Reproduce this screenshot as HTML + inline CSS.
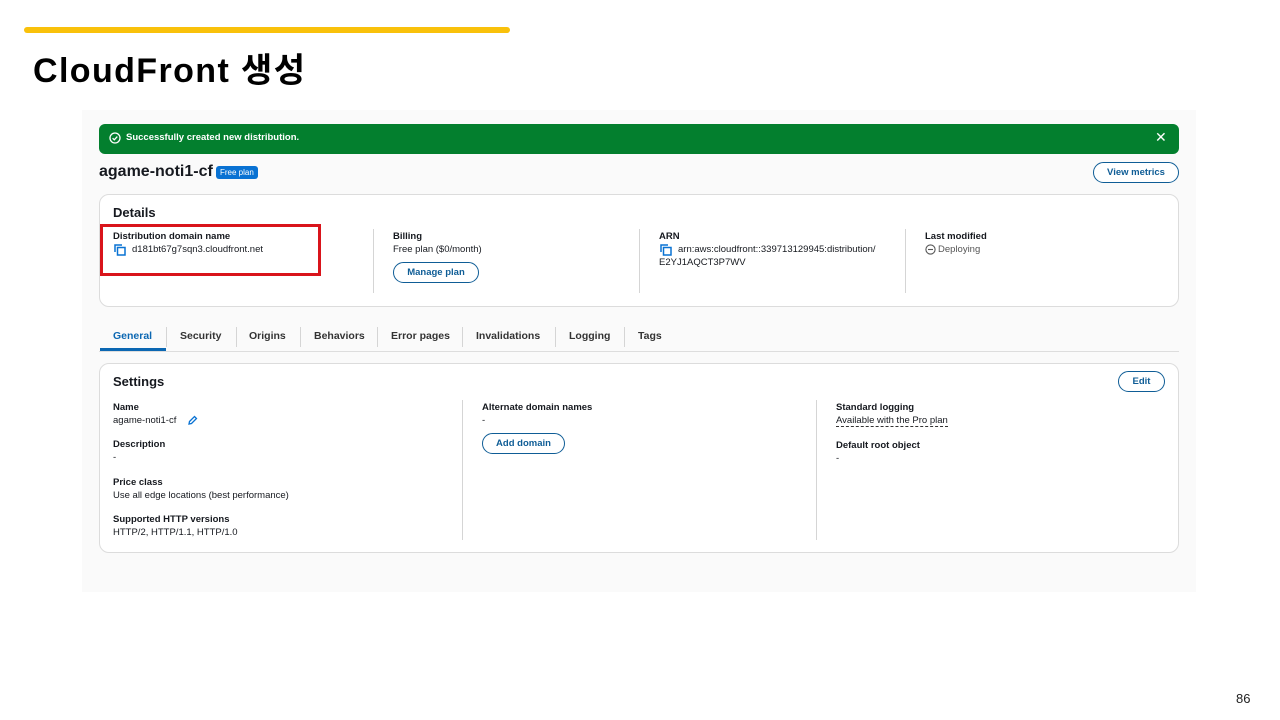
<!DOCTYPE html>
<html><head><meta charset="utf-8"><style>
*{margin:0;padding:0;box-sizing:border-box}
body{width:1280px;height:720px;background:#fff;position:relative;font-family:"Liberation Sans","Noto Sans CJK KR",sans-serif;color:#16191f;overflow:hidden}
.a{position:absolute;white-space:nowrap}
.s{font-size:9.5px}
.b{font-weight:bold}
.card{position:absolute;background:#fff;border:1px solid #dcdcdc;border-radius:10px}
.btn{position:absolute;border:1.5px solid #0f5d96;border-radius:14px;color:#0f5d96;font-weight:bold;font-size:9.5px;background:#fff;display:flex;align-items:center;justify-content:center}
.vl{position:absolute;width:1px;background:#d5d5d5}
</style></head><body>
<div class="a" style="left:24px;top:27px;width:486px;height:6px;background:#f9c10b;border-radius:3px"></div>
<div class="a b" style="left:33px;top:43px;font-size:34px;letter-spacing:1.4px;color:#000">CloudFront 생성</div>
<div class="a" style="left:82px;top:110px;width:1114px;height:482px;background:#fafafa"></div>
<div class="a" style="left:99px;top:124px;width:1080px;height:30px;background:#037f2e;border-radius:6px"></div>
<svg class="a" style="left:109px;top:132px" width="12" height="12" viewBox="0 0 12 12"><circle cx="6" cy="6" r="5" fill="none" stroke="#fff" stroke-width="1.3"/><path d="M3.6 6.2l1.7 1.6 3-3.2" fill="none" stroke="#fff" stroke-width="1.3"/></svg>
<div class="a b" style="left:126px;top:132px;font-size:9.5px;color:#fff">Successfully created new distribution.</div>
<div class="a" style="left:1155px;top:129px;font-size:14px;color:#fff">✕</div>
<div class="a b" style="left:99px;top:163px;font-size:16px">agame-noti1-cf</div>
<div class="a" style="left:216px;top:166px;background:#0972d3;color:#fff;font-size:8px;padding:2px 4px;border-radius:3px">Free plan</div>
<div class="btn" style="left:1093px;top:162px;width:86px;height:21px">View metrics</div>
<div class="card" style="left:99px;top:194px;width:1080px;height:113px"></div>
<div class="a b" style="left:113px;top:205px;font-size:13px">Details</div>
<div class="a" style="left:100px;top:224px;width:221px;height:52px;border:3px solid #d9141b"></div>
<div class="a b s" style="left:113px;top:231px">Distribution domain name</div>
<svg class="a" style="left:114px;top:244px" width="13" height="12" viewBox="0 0 13 12"><path d="M1 8V1h7" fill="none" stroke="#0972d3" stroke-width="1.5"/><rect x="3.5" y="3.5" width="7.5" height="7.5" fill="none" stroke="#0972d3" stroke-width="1.5"/></svg>
<div class="a s" style="left:132px;top:244px">d181bt67g7sqn3.cloudfront.net</div>
<div class="vl" style="left:373px;top:229px;height:64px"></div>
<div class="a b s" style="left:393px;top:231px">Billing</div>
<div class="a s" style="left:393px;top:244px">Free plan ($0/month)</div>
<div class="btn" style="left:393px;top:262px;width:86px;height:21px">Manage plan</div>
<div class="vl" style="left:639px;top:229px;height:64px"></div>
<div class="a b s" style="left:659px;top:231px">ARN</div>
<svg class="a" style="left:660px;top:244px" width="13" height="12" viewBox="0 0 13 12"><path d="M1 8V1h7" fill="none" stroke="#0972d3" stroke-width="1.5"/><rect x="3.5" y="3.5" width="7.5" height="7.5" fill="none" stroke="#0972d3" stroke-width="1.5"/></svg>
<div class="a s" style="left:678px;top:244px">arn:aws:cloudfront::339713129945:distribution/</div>
<div class="a s" style="left:659px;top:257px">E2YJ1AQCT3P7WV</div>
<div class="vl" style="left:905px;top:229px;height:64px"></div>
<div class="a b s" style="left:925px;top:231px">Last modified</div>
<svg class="a" style="left:925px;top:244px" width="11" height="11" viewBox="0 0 11 11"><circle cx="5.5" cy="5.5" r="4.6" fill="none" stroke="#555" stroke-width="1.1"/><path d="M3 5.5h5" stroke="#555" stroke-width="1.1"/></svg>
<div class="a s" style="left:938px;top:244px;color:#555">Deploying</div>
<div class="a" style="left:99px;top:351px;width:1080px;height:1px;background:#ddd"></div>
<div class="a" style="left:100px;top:348px;width:66px;height:3px;background:#0b67b2"></div>
<div class="a b" style="font-size:10.5px;left:113px;top:330px;color:#0b67b2">General</div>
<div class="a b" style="font-size:10.5px;left:180px;top:330px;color:#333">Security</div>
<div class="a b" style="font-size:10.5px;left:249px;top:330px;color:#333">Origins</div>
<div class="a b" style="font-size:10.5px;left:314px;top:330px;color:#333">Behaviors</div>
<div class="a b" style="font-size:10.5px;left:391px;top:330px;color:#333">Error pages</div>
<div class="a b" style="font-size:10.5px;left:476px;top:330px;color:#333">Invalidations</div>
<div class="a b" style="font-size:10.5px;left:569px;top:330px;color:#333">Logging</div>
<div class="a b" style="font-size:10.5px;left:638px;top:330px;color:#333">Tags</div>
<div class="vl" style="left:166px;top:327px;height:20px"></div><div class="vl" style="left:236px;top:327px;height:20px"></div><div class="vl" style="left:300px;top:327px;height:20px"></div><div class="vl" style="left:377px;top:327px;height:20px"></div><div class="vl" style="left:462px;top:327px;height:20px"></div><div class="vl" style="left:555px;top:327px;height:20px"></div><div class="vl" style="left:624px;top:327px;height:20px"></div>
<div class="card" style="left:99px;top:363px;width:1080px;height:190px"></div>
<div class="a b" style="left:113px;top:374px;font-size:13px">Settings</div>
<div class="btn" style="left:1118px;top:371px;width:47px;height:21px">Edit</div>
<div class="a b s" style="left:113px;top:402px">Name</div>
<div class="a s" style="left:113px;top:415px">agame-noti1-cf</div>
<svg class="a" style="left:187px;top:415px" width="11" height="11" viewBox="0 0 11 11"><path d="M2 9l0.5-2.5 5-5 2 2-5 5z" fill="none" stroke="#0972d3" stroke-width="1.3"/></svg>
<div class="a b s" style="left:113px;top:439px">Description</div>
<div class="a s" style="left:113px;top:452px">-</div>
<div class="a b s" style="left:113px;top:477px">Price class</div>
<div class="a s" style="left:113px;top:490px">Use all edge locations (best performance)</div>
<div class="a b s" style="left:113px;top:514px">Supported HTTP versions</div>
<div class="a s" style="left:113px;top:527px">HTTP/2, HTTP/1.1, HTTP/1.0</div>
<div class="vl" style="left:462px;top:400px;height:140px"></div>
<div class="a b s" style="left:482px;top:402px">Alternate domain names</div>
<div class="a s" style="left:482px;top:415px">-</div>
<div class="btn" style="left:482px;top:433px;width:83px;height:21px">Add domain</div>
<div class="vl" style="left:816px;top:400px;height:140px"></div>
<div class="a b s" style="left:836px;top:402px">Standard logging</div>
<div class="a s" style="left:836px;top:415px;border-bottom:1px dashed #333">Available with the Pro plan</div>
<div class="a b s" style="left:836px;top:440px">Default root object</div>
<div class="a s" style="left:836px;top:453px">-</div>
<div class="a" style="left:1236px;top:691px;font-size:13px;color:#222">86</div>
</body></html>
